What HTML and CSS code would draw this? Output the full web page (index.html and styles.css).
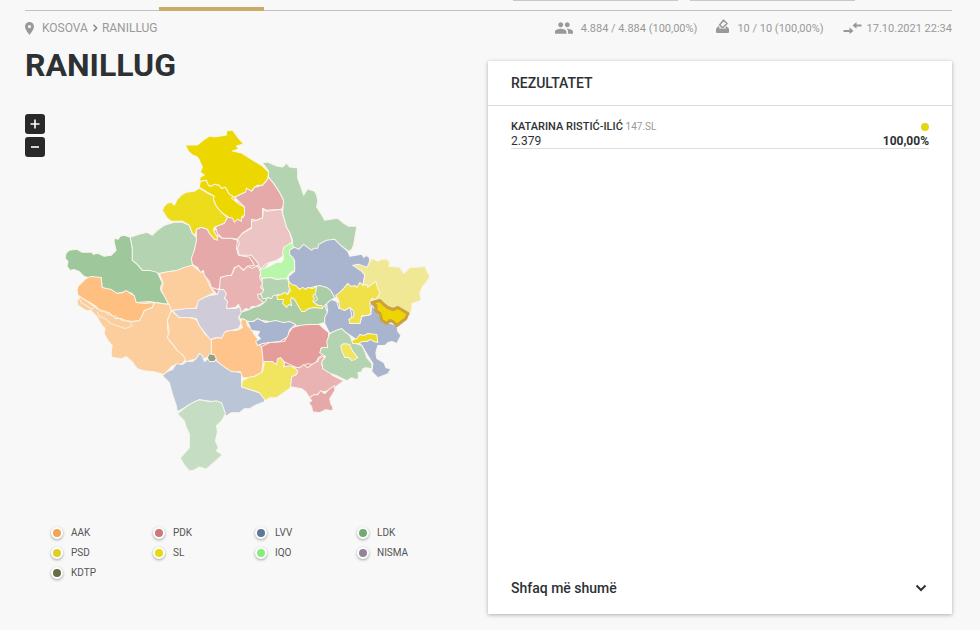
FILE: index.html
```html
<!DOCTYPE html>
<html lang="sq">
<head>
<meta charset="utf-8">
<meta name="viewport" content="width=device-width, initial-scale=1">
<title>Ranillug</title>
<link rel="stylesheet" href="styles.css">
</head>
<body>
<div class="page">
  <header class="topbar">
    <span class="tab-marker"></span>
    <span class="field-edge field-edge-first"></span>
    <span class="field-edge"></span>
  </header>

  <div class="meta">
    <nav class="crumbs" aria-label="Vendndodhja">
      <svg class="pin" viewBox="5 2 14 20" aria-hidden="true"><path d="M12 2C8.1 2 5 5.100 5 9c0 5.200 7 13 7 13s7-7.800 7-13c0-3.900-3.100-7-7-7zm0 9.500a2.500 2.500 0 1 1 0-5 2.500 2.500 0 0 1 0 5z"/></svg>
      <a href="#">KOSOVA</a>
      <svg class="sep" viewBox="0 0 6 8" aria-hidden="true"><path d="M1.500 .8 4.700 4 1.500 7.200"/></svg>
      <span>RANILLUG</span>
    </nav>
    <ul class="stats">
      <li><svg class="people" viewBox="1 5 22 14" aria-hidden="true"><path d="M16 11c1.660 0 2.990-1.340 2.990-3S17.660 5 16 5s-3 1.340-3 3 1.340 3 3 3zm-8 0c1.660 0 2.990-1.340 2.990-3S9.660 5 8 5 5 6.340 5 8s1.340 3 3 3zm0 2c-2.330 0-7 1.170-7 3.500V19h14v-2.500C15 14.170 10.330 13 8 13zm8 0c-.29 0-.62.020-.97.050 1.160.84 1.970 1.970 1.970 3.450V19h6v-2.500c0-2.330-4.670-3.500-7-3.500z"/></svg>4.884 / 4.884 (100,00%)</li>
      <li><svg class="ballot" viewBox="0 0 13 14" aria-hidden="true"><path class="sheet" d="M7.500 1.200 11 4.500 7.200 8.300H5.800L3.600 6z"/><path d="M2.500 7 0 9.800V13a1 1 0 0 0 1 1h11a1 1 0 0 0 1-1V9.800L10.600 7.200 9.300 8.500l1 1.100H2.600l1.100-1.200z"/></svg>10 / 10 (100,00%)</li>
      <li><svg class="arrows" viewBox="0 0 18 12" aria-hidden="true"><path d="M0 8h6V5.300L10 9l-4 3V10H0zM18 2.500h-5V0L9 3.500l4 3.200V4.500h5z"/></svg>17.10.2021 22:34</li>
    </ul>
  </div>

  <main class="content">
    <section class="region">
      <h1>RANILLUG</h1>
      <div class="map-area">
        <div class="zoom">
          <button type="button" aria-label="Zmadho"><svg viewBox="0 0 10 10"><path d="M5 .5v9M.5 5h9"/></svg></button>
          <button type="button" aria-label="Zvogëlo"><svg viewBox="0 0 10 10"><path d="M1 5h8"/></svg></button>
        </div>
        <svg class="map" viewBox="62 126 372 348" role="img" aria-label="Harta e komunave">
          <!-- Base fills that close the seams between neighbours -->
          <g>
            <path class="pdk-2" d="M198 232L218 230 240 200 268 180 280 200 290 240 262 270 262 300 228 306 200 272z"/>
            <path class="ldk-3" d="M262 280L290 280 333 298 325 320 245 318 260 300z"/>
            <path class="sl-1" d="M207 183L233 192 240 217 220 212 208 192z"/>
            <path class="pdk-1" d="M260 345L295 325 320 326 325 360 300 372 288 367z"/>
            <path class="aak-3" d="M163 280L190 268 213 292 200 305 180 315 200 350 172 340 150 330 140 300z"/>
            <path class="nisma" d="M195 302L225 290 229 306 241 310 240 325 212 337z"/>
            <path class="lvv-1" d="M330 305L345 300 380 305 375 315 350 327z"/>
          </g>
          <polygon class="ldk-2" points="131,237 140,234 148,232 153,235 158,230 165,225 175,222 183,222 190,225 193,233 198,238 195,250 193,265 185,267 178,270 170,271 160,273 150,270 143,270 138,264 133,260 133,248"/>
          <polygon class="ldk-1" points="66,258 67,253 70,250 78,249 83,252 93,252 94,254 99,253 105,256 112,255 117,250 115,242 115,238 119,239 121,236 125,235 131,237 133,248 133,260 138,264 143,270 150,270 158,272 161,278 163,283 161,287 162,291 166,296 169,304 150,301 137,302 133,293 127,291 118,293 103,287 102,277 95,277 89,277 85,276 80,271 75,269 71,270 68,266 69,261"/>
          <polygon class="aak-3" points="160,273 170,271 178,270 185,267 193,265 198,269 205,273 207,278 213,290 215,292 205,297 200,300 196,308 182,309 172,310 169,303 162,290 164,283"/>
          <polygon class="aak-3" points="78,300 82,296 87,300 98,308 110,312 122,318 132,321 140,320 145,310 153,307 155,302 163,303 170,304 172,310 169,318 168,325 170,340 180,350 187,358 183,363 173,365 165,374 155,371 145,370 138,368 133,361 127,356 122,358 113,357 112,352 113,345 109,340 105,333 106,328 103,325 97,315 92,310 87,310 79,305"/>
          <polygon class="aak-1" points="78,290 79,286 84,281 87,278 92,276 102,277 103,287 112,289 118,293 124,292 127,290 131,293 135,295 137,302 146,303 155,302 153,307 145,310 142,317 140,320 132,321 126,320 122,318 116,318 110,312 104,311 98,308 94,304 87,300 79,295"/>
          <path class="line" d="M80 297l2 5 5 3 6 4 3-4 6 6 3-1 4 4 8 2 6 4 8 1 2 5M98 311l2 5 6 2 6 5 8 3 6 2 6-2"/>
          <polygon class="aak-3" points="172,310 180,317 190,317 197,319 200,325 206,334 212,338 212,355 207,357 204,358 200,353 197,358 187,361 184,355 178,350 172,342 168,337 170,331 168,320"/>
          <polygon class="pdk-2" points="197,229 202,227 208,229 210,233 215,239 218,235 223,238 232,238 238,240 237,248 239,255 250,257 255,265 248,266 245,270 239,266 235,267 232,275 221,277 222,282 219,289 212,287 210,281 205,275 204,270 201,272 198,267 193,264 192,258 195,250 197,240"/>
          <polygon class="pdk-2" points="235,197 243,193 247,188 252,191 255,187 263,185 268,179 269,177 274,183 280,192 284,200 284,205 282,209 267,210 263,208 263,218 257,220 252,219 252,227 243,233 238,239 232,238 223,238 218,233 216,226 225,222 228,217 244,217 245,207"/>
          <polygon class="pdk-4" points="264,209 267,211 274,210 282,209 283,214 285,220 287,227 290,232 293,243 287,249 283,256 277,260 267,263 261,269 258,262 252,255 240,255 238,248 240,243 238,239 243,233 252,228 252,221 258,220 261,218 263,218"/>
          <polygon class="ldk-2" points="263,163 268,162 277,166 283,167 287,163 290,167 298,168 298,178 301,186 304,195 307,190 309,189 315,191 317,195 318,200 317,207 321,213 325,220 331,219 338,218 344,223 349,226 357,226 356,232 355,238 354,244 352,249 349,251 342,246 335,242 327,244 318,249 313,252 304,247 295,250 292,244 293,240 290,232 287,227 285,220 283,213 284,200 280,192 274,183 269,177 269,171"/>
          <polygon class="lvv-1" points="289,250 295,247 299,249 304,244 308,247 312,250 314,248 318,248 319,244 327,240 335,239 341,245 348,251 350,256 356,255 362,254 364,257 367,255 370,258 369,265 365,275 363,285 355,288 348,288 340,294 335,298 325,289 315,288 307,290 298,288 289,283 289,276 295,271 295,260 289,255"/>
          <polygon class="iqo" points="292,242 294,247 290,250 290,254 294,258 295,263 295,270 291,272 287,278 277,279 271,277 262,278 260,270 264,268 270,266 277,262 282,262 284,258 283,252 284,247"/>
          <polygon class="ldk-2" points="263,278 271,277 277,279 287,278 290,282 290,288 288,294 278,298 263,298 261,293 264,289 262,284"/>
          <polygon class="ldk-3" points="240,317 240,312 247,310 254,307 261,305 266,301 268,297 272,298 274,295 280,294 290,293 302,290 315,286 320,285 327,287 331,290 335,297 330,301 325,305 327,310 329,315 325,322 318,324 308,326 290,325 270,321 262,320 250,321 243,320"/>
          <path class="line" d="M316 287L315 293 318 299 314 302 322 307 329 304"/>
          <polygon class="sl-2" points="289,281 292,284 296,285 300,289 303,287 306,289 308,287 313,288 317,286 316,292 313,296 315,298 313,301 318,305 322,305 323,308 315,307 309,308 305,311 302,311 299,306 295,299 292,297 291,300 292,305 289,304 287,307 283,303 284,299 278,299 277,295 282,294 285,292 288,294 291,290 289,286"/>
          <polygon class="pdk-3" points="221,277 228,275 232,275 235,268 239,265 244,270 248,266 253,268 258,265 261,272 260,277 263,283 261,287 264,290 262,293 258,294 259,298 264,302 257,306 252,306 250,309 246,308 242,312 239,304 236,307 228,308 226,304 228,301 225,298 226,293 220,289"/>
          <polygon class="nisma" points="180,309 188,308 197,308 199,300 205,297 210,295 218,294 220,289 224,289 227,293 225,298 228,301 227,308 236,308 240,306 242,312 239,317 242,323 239,328 232,330 226,331 224,338 217,337 211,339 206,333 200,325 197,318 190,317 180,317 173,310"/>
          <polygon class="lvv-2" points="163,375 168,371 173,369 177,363 183,364 187,361 193,361 197,358 200,353 203,355 205,361 209,358 220,361 226,367 232,370 242,372 242,386 251,389 260,392 265,397 265,401 257,404 250,408 245,408 240,412 232,412 227,415 223,414 222,402 200,399 178,411 177,405 173,393 170,382"/>
          <polygon class="aak-2" points="212,339 218,337 222,338 225,332 230,330 237,330 243,327 241,322 243,318 247,320 248,325 252,328 254,333 258,338 260,345 262,346 264,360 262,372 252,377 243,377 241,371 232,371 226,367 219,362 212,355"/>
          <polygon class="pdk-1" points="262,346 270,342 285,341 288,334 293,327 300,325 308,324 320,324 323,327 329,332 328,347 321,348 323,354 319,357 315,364 308,363 298,368 293,365 282,360 277,364 264,364"/>
          <polygon class="lvv-1" points="248,321 254,321 258,318 266,322 276,320 284,322 290,321 296,324 290,329 288,336 285,338 280,341 270,342 263,343 258,345 256,341 261,338 258,335 260,331 252,330"/>
          <polygon class="psd-2" points="242,386 243,380 251,376 255,376 263,371 265,361 273,361 277,364 278,358 281,357 285,362 284,366 290,365 298,369 298,373 292,377 291,387 284,392 277,397 270,397 266,400 260,392 251,389"/>
          <polygon class="pdk-3" points="293,366 300,367 304,364 308,367 315,362 318,361 319,358 325,355 322,364 324,368 329,370 333,375 344,380 335,387 330,390 323,391 310,397 306,391 302,388 291,386 292,376 297,374 298,370"/>
          <polygon class="pdk-2" points="310,397 314,394 318,394 321,390 325,393 330,388 335,385 335,390 330,398 331,403 333,406 333,410 326,409 320,412 313,411 312,406 309,402 312,400"/>
          <polygon class="lvv-1" points="327,303 332,299 337,301 339,308 350,306 352,315 350,323 360,323 362,316 371,314 372,305 378,312 382,320 397,325 398,331 401,335 397,343 392,341 388,342 385,345 378,345 376,352 377,358 384,362 386,367 391,368 388,373 378,377 372,371 373,363 368,355 362,345 354,337 343,330 330,333 325,323 325,317 328,311"/>
          <polygon class="ldk-2" points="330,333 336,330 342,328 345,331 350,335 353,342 362,345 365,351 367,357 372,363 372,368 366,367 363,368 362,371 358,372 359,376 357,379 352,377 347,380 337,375 329,372 323,368 322,361 326,356 320,352 322,347 328,347 327,341"/>
          <polygon class="psd-2" points="341,345 344,343 350,344 352,349 354,352 358,357 355,359 352,360 349,357 345,357 342,350"/>
          <polygon class="sl-2" points="352,340 357,338 360,334 364,335 368,333 377,334 378,342 374,341 371,339 367,341 362,341 359,343 353,343"/>
          <polygon class="psd-3" points="353,265 359,264 365,266 367,267 372,258 378,261 382,259 387,259 390,262 389,266 400,267 404,273 410,267 418,267 425,266 427,271 430,276 427,281 422,287 420,292 421,300 412,303 412,308 410,315 397,308 390,310 382,302 372,300 378,295 377,286 370,290 363,285 365,275 362,271"/>
          <polygon class="psd-1" points="336,295 340,292 344,288 348,283 351,286 355,285 357,287 360,282 363,285 367,284 368,287 372,284 376,281 377,285 380,293 376,299 372,298 370,302 371,313 368,315 362,315 360,323 350,323 349,319 354,316 354,311 350,307 345,310 340,308 339,300"/>
          <polygon class="sl-2" points="163,210 165,206 168,203 172,202 175,205 178,199 182,195 187,192 195,191 200,188 208,193 215,196 214,199 217,206 222,212 228,217 225,223 215,227 214,230 218,237 218,240 215,239 210,233 208,229 202,227 197,229 196,235 193,233 190,225 183,221 172,221 168,218"/>
          <polygon class="sl-1" points="200,187 201,181 207,180 209,185 212,186 215,184 220,185 222,188 226,187 230,194 234,196 232,198 237,202 245,207 245,215 242,217 242,221 238,219 235,222 233,218 229,217 222,212 217,206 214,199 215,196 208,192"/>
          <polygon class="sl-1" points="186,145 198,145 204,140 210,136 215,137 227,135 227,131 233,130 238,137 244,144 237,146 239,149 233,151 242,153 253,160 263,166 269,172 268,179 263,185 258,185 255,187 252,191 247,188 246,192 243,193 235,197 230,194 226,187 222,188 220,185 215,184 212,186 209,185 207,180 200,181 201,177 205,175 201,172 203,167 200,160 198,157 193,155 189,151"/>
          <polygon class="ldk-4" points="178,413 188,405 193,402 200,399 211,401 217,400 222,402 224,407 226,413 223,419 217,425 218,431 216,440 219,447 217,450 223,454 215,461 207,468 200,466 195,469 190,470 185,464 181,457 190,447 190,433 187,427 185,420"/>
          <polygon class="kdtp" points="208,357 210,353 213,354 215,354 217,358 215,361 210,361"/>
          <polygon class="selected" points="372,302 380,300 384,304 388,307 393,309 398,307 408,313 406,318 397,325 393,321 390,320 387,323 382,320 380,313 376,310 376,305"/>
        </svg>
      </div>
      <ul class="legend">
        <li><i class="dot c-aak"></i>AAK</li><li><i class="dot c-pdk"></i>PDK</li><li><i class="dot c-lvv"></i>LVV</li><li><i class="dot c-ldk"></i>LDK</li>
        <li><i class="dot c-psd"></i>PSD</li><li><i class="dot c-sl"></i>SL</li><li><i class="dot c-iqo"></i>IQO</li><li><i class="dot c-nisma"></i>NISMA</li>
        <li><i class="dot c-kdtp"></i>KDTP</li>
      </ul>
    </section>

    <section class="card">
      <h2>REZULTATET</h2>
      <ul class="results">
        <li class="result">
          <div class="line-row"><span><b>KATARINA RISTIĆ-ILIĆ</b> <small>147.SL</small></span><i class="party"></i></div>
          <div class="line-row figures"><span>2.379</span><strong>100,00%</strong></div>
        </li>
      </ul>
      <button class="more" type="button">Shfaq më shumë<svg viewBox="0 0 12 8" aria-hidden="true"><path d="M1.500 1.500 6 6l4.500-4.500"/></svg></button>
    </section>
  </main>
</div>
</body>
</html>
```
FILE: styles.css
```css
* { box-sizing: border-box; }

body {
  margin: 0;
  background: #f8f8f8;
  color: #2d3134;
  font-family: Roboto, "Liberation Sans", sans-serif;
  font-size: 12px;
}

ul { list-style: none; margin: 0; padding: 0; }
h1, h2 { margin: 0; }
button { font: inherit; color: inherit; border: 0; cursor: pointer; }

.page {
  display: flex;
  flex-direction: column;
  min-height: 100vh;
  padding: 0 28px 16px 25px;
}

/* Top bar */
.topbar {
  display: flex;
  height: 11px;
  border-bottom: 1px solid #c2c2c2;
}
.tab-marker {
  width: 105px;
  height: 4px;
  margin: 7px auto 0 134px;
  background: #c8ab66;
}
.field-edge {
  width: 165px;
  height: 1px;
  margin-right: 97px;
  background: #c9c9c9;
}
.field-edge-first { margin-right: 12px; }

.meta {
  display: flex;
  justify-content: space-between;
  align-items: center;
  height: 34px;
  color: #999;
}
.meta svg { fill: #999; }
.meta a { color: inherit; text-decoration: none; }
.crumbs { display: flex; align-items: center; }
.pin { width: 9px; height: 13px; margin-right: 8px; }
.crumbs .sep { width: 6px; height: 8px; margin: 0 4px; fill: none; stroke: #888; stroke-width: 1.5; }
.stats { display: flex; gap: 19px; font-size: 11px; }
.stats li { display: flex; align-items: center; }
.people { width: 18px; height: 12px; margin-right: 8px; }
.ballot { width: 13px; height: 14px; margin: 0 8px 4px 0; }
.ballot .sheet { fill: none; stroke: #999; stroke-width: 1.5; }
.arrows { width: 19px; height: 12px; margin-right: 5px; }

.content {
  flex: 1;
  display: grid;
  grid-template-columns: 463fr 464fr;
}

/* Map column */
h1 { font-size: 32px; line-height: 40px; font-weight: 700; }
.map-area {
  display: flex;
  align-items: flex-start;
  margin-top: 29px;
}
.zoom { display: grid; gap: 3px; width: 20px; }
.zoom button {
  display: grid;
  place-items: center;
  width: 20px;
  height: 20px;
  padding: 0;
  border-radius: 3px;
  background: #292929;
}
.zoom svg { width: 10px; height: 10px; fill: none; stroke: #fff; stroke-width: 1.6; }
.map { flex: 1; min-width: 0; margin: 12px 54px 0 16px; }
.map polygon { stroke: #f8f5ec; stroke-width: 1; stroke-linejoin: round; }
.map .line { fill: none; stroke: #f8ecdc; stroke-width: 1; }
.map .selected { fill: #ecd500; stroke: #cba041; stroke-width: 3; }
.sl-1 { fill: #ecd800; }
.sl-2 { fill: #eddc1c; }
.psd-1 { fill: #f0e04a; }
.psd-2 { fill: #f1e45f; }
.psd-3 { fill: #f1e896; }
.pdk-1 { fill: #e49d9b; }
.pdk-2 { fill: #e6a9a9; }
.pdk-3 { fill: #eab3b3; }
.pdk-4 { fill: #edc4c4; }
.ldk-1 { fill: #9ec79b; }
.ldk-2 { fill: #b4d3b0; }
.ldk-3 { fill: #aacda7; }
.ldk-4 { fill: #c5ddc2; }
.lvv-1 { fill: #a9b5ce; }
.lvv-2 { fill: #bac6d8; }
.aak-1 { fill: #ffbf80; }
.aak-2 { fill: #ffc48c; }
.aak-3 { fill: #fccd9d; }
.iqo { fill: #b8f7a9; }
.nisma { fill: #d0cbd8; }
.kdtp { fill: #96a184; }

.legend {
  display: grid;
  grid-template-columns: repeat(4, 102px);
  margin: 48px 0 0 26px;
  color: #555;
  font-size: 10px;
}
.legend li { display: flex; align-items: center; height: 20px; }
.dot {
  width: 12px;
  height: 12px;
  margin-right: 8px;
  border: 2px solid #fff;
  border-radius: 50%;
  box-shadow: 0 1px 3px rgba(0, 0, 0, .35);
}
.c-aak { background: #f0a555; }
.c-pdk { background: #cd7777; }
.c-lvv { background: #5b7897; }
.c-ldk { background: #73aa73; }
.c-psd { background: #dfcf25; }
.c-sl { background: #e6d90f; }
.c-iqo { background: #85ec7d; }
.c-nisma { background: #93849a; }
.c-kdtp { background: #656c43; }

/* Results card */
.card {
  display: flex;
  flex-direction: column;
  margin-top: 16px;
  background: #fff;
  box-shadow: 0 1px 4px rgba(0, 0, 0, .3);
}
h2 {
  padding: 0 23px;
  border-bottom: 1px solid #ddd;
  font-size: 14px;
  line-height: 44px;
  font-weight: 500;
}
.results { flex: 1; padding: 14px 23px; }
.result { border-bottom: 1px solid #ddd; }
.line-row {
  display: flex;
  justify-content: space-between;
  align-items: center;
  line-height: 14px;
  font-size: 11px;
}
.line-row b { font-weight: 500; }
.line-row small { color: #999; font-size: 10px; }
.figures { font-size: 12px; }
.party { width: 8px; height: 8px; border-radius: 50%; background: #e3d80f; }
.more {
  display: flex;
  justify-content: space-between;
  align-items: center;
  height: 52px;
  padding: 0 25px 0 23px;
  background: none;
  font-size: 14px;
  font-weight: 500;
}
.more svg { width: 12px; height: 8px; fill: none; stroke: #2d3134; stroke-width: 2; }
```
